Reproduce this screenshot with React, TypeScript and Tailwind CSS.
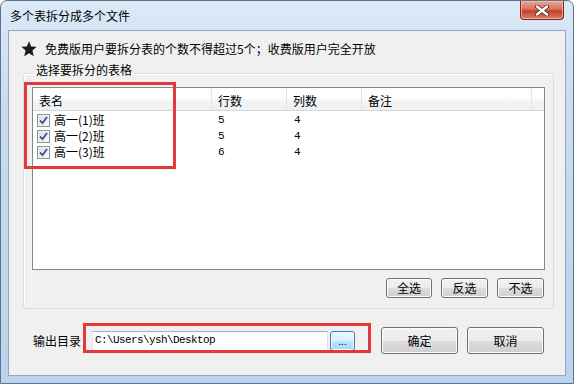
import React from "react";

const rows = [
  { name: "高一(1)班", r: "5", c: "4" },
  { name: "高一(2)班", r: "5", c: "4" },
  { name: "高一(3)班", r: "6", c: "4" },
];

function WinButton({ label, className }: { label: string; className: string }) {
  return (
    <button className={`flex items-center justify-center rounded-[3px] border border-[#707070] bg-[linear-gradient(#f2f2f2_0%,#ebebeb_50%,#dddddd_50%,#cfcfcf_100%)] shadow-[inset_0_0_0_1px_#fcfcfc] leading-none text-black ${className}`}>
      {label}
    </button>
  );
}

function CheckBox() {
  return (
    <span className="flex h-[13px] w-[13px] items-center justify-center border border-[#8e8f8f] bg-[linear-gradient(135deg,#d8d8d8,#fbfbfb)] shadow-[inset_0_0_0_1px_#f4f4f4]">
      <svg width="9" height="9" viewBox="0 0 9 9">
        <path d="M1 4.5 L3.5 7.2 L8 1" fill="none" stroke="#3b4f8c" strokeWidth="1.8" />
      </svg>
    </span>
  );
}

export default function App() {
  return (
    <div className="relative flex h-[384px] w-[574px] flex-col overflow-hidden rounded-t-[7px] border border-[#5f738c] bg-[linear-gradient(180deg,#dce9f7_0%,#c9dcf1_25%,#bcd2ec_100%)] font-['Noto_Sans_CJK_SC',sans-serif] text-[12px] text-black">
      {/* title bar */}
      <div className="flex h-[29px] shrink-0 items-start justify-between pl-[9px] pr-[9px]">
        <span className="mt-[7px] leading-[16px]">多个表拆分成多个文件</span>
        <button className="flex h-[19px] w-[44px] items-center justify-center rounded-b-[4px] border border-t-0 border-[#7d2b22] bg-[linear-gradient(#eaa996_0%,#d7725f_45%,#c1412c_55%,#d6806a_100%)] shadow-[inset_0_0_0_1px_rgba(255,200,190,0.6)]">
          <svg width="14" height="11" viewBox="0 0 14 11">
            <path d="M2 1.5 L12 9.5 M12 1.5 L2 9.5" stroke="#5a2a25" strokeWidth="4" strokeLinecap="round" />
            <path d="M2 1.5 L12 9.5 M12 1.5 L2 9.5" stroke="#ffffff" strokeWidth="2.4" strokeLinecap="round" />
          </svg>
        </button>
      </div>

      {/* client area */}
      <div className="relative mx-[7px] mb-[7px] flex flex-1 flex-col border border-[#92a8c1] bg-[#f0f0f0]">
        <div className="mt-[10px] flex h-[16px] items-center pl-[12px]">
          <svg width="16" height="16" viewBox="0 0 24 24">
            <polygon points="12,0.5 15.2,8.3 23.5,8.8 17.1,14.2 19.2,22.8 12,18.2 4.8,22.8 6.9,14.2 0.5,8.8 8.8,8.3" fill="#1a1a1a" />
          </svg>
          <span className="ml-[8px] leading-[16px]">免费版用户要拆分表的个数不得超过5个；收费版用户完全开放</span>
        </div>

        <fieldset className="mt-[6px] ml-[14px] mr-[11px] rounded-[3px] border border-[#d5dfe5] px-[8px] pb-[10px] pt-[4px] shadow-[inset_1px_1px_0_#ffffff]">
          <legend className="ml-[2px] h-[20px] px-[2px] leading-[14px]">选择要拆分的表格</legend>

          <div className="flex h-[183px] flex-col border border-[#828790] bg-white">
            <div className="flex h-[23px] shrink-0 border-b border-[#d5d5d5] bg-[linear-gradient(#ffffff_0%,#ffffff_45%,#f4f5f7_55%,#eef0f2_100%)]">
              <div className="flex w-[179px] items-center border-r border-[#e2e4e7] pl-[6px] pt-[3px]">表名</div>
              <div className="flex w-[75px] items-center border-r border-[#e2e4e7] pl-[6px] pt-[3px]">行数</div>
              <div className="flex w-[75px] items-center border-r border-[#e2e4e7] pl-[6px] pt-[3px]">列数</div>
              <div className="flex w-[170px] items-center border-r border-[#e2e4e7] pl-[6px] pt-[3px]">备注</div>
              <div className="flex-1" />
            </div>
            <div className="mt-[1px] flex flex-col">
              {rows.map((row) => (
                <div key={row.name} className="flex h-[16px] items-center">
                  <div className="flex w-[179px] items-center gap-[4px] pl-[4px]">
                    <CheckBox />
                    <span className="leading-[16px]">{row.name}</span>
                  </div>
                  <div className="w-[76px] pl-[6px] font-['Liberation_Mono',monospace] text-[11px]">{row.r}</div>
                  <div className="w-[75px] pl-[6px] font-['Liberation_Mono',monospace] text-[11px]">{row.c}</div>
                </div>
              ))}
            </div>
          </div>

          <div className="mt-[8px] flex justify-end gap-[9px] pr-[1px]">
            <WinButton label="全选" className="h-[20px] w-[46px]" />
            <WinButton label="反选" className="h-[20px] w-[47px]" />
            <WinButton label="不选" className="h-[20px] w-[47px]" />
          </div>
        </fieldset>

        <div className="mt-[18px] flex h-[27px] items-center pl-[24px]">
          <span className="w-[59px] leading-[16px]">输出目录</span>
          <div className="flex h-[20px] w-[236px] items-center border border-[#abadb3] border-b-[#e3e9ef] border-l-[#e2e3ea] border-r-[#dbdfe6] bg-white pl-[2px] font-['Liberation_Mono',monospace] text-[11px] tracking-[-0.6px]">
            {"C:\\Users\\ysh\\Desktop"}
          </div>
          <button className="ml-[2px] flex h-[20px] w-[25px] items-end justify-center rounded-[3px] border border-[#3c7fb1] bg-[linear-gradient(#eaf6fd_0%,#d9f0fc_50%,#bee6fd_50%,#a7d9f5_100%)] pb-[4px] text-[10px] leading-none shadow-[inset_0_0_0_1px_#f0f9ff]">
            ...
          </button>
          <WinButton label="确定" className="ml-[26px] h-[27px] w-[77px]" />
          <WinButton label="取消" className="ml-[9px] h-[27px] w-[77px]" />
        </div>

        {/* red highlight overlays */}
        <div className="pointer-events-none absolute left-[15px] top-[51px] h-[87px] w-[152px] border-[3px] border-[#e3393d]" />
        <div className="pointer-events-none absolute left-[74px] top-[292px] h-[30px] w-[288px] border-[3px] border-[#e3393d]" />
      </div>
    </div>
  );
}
